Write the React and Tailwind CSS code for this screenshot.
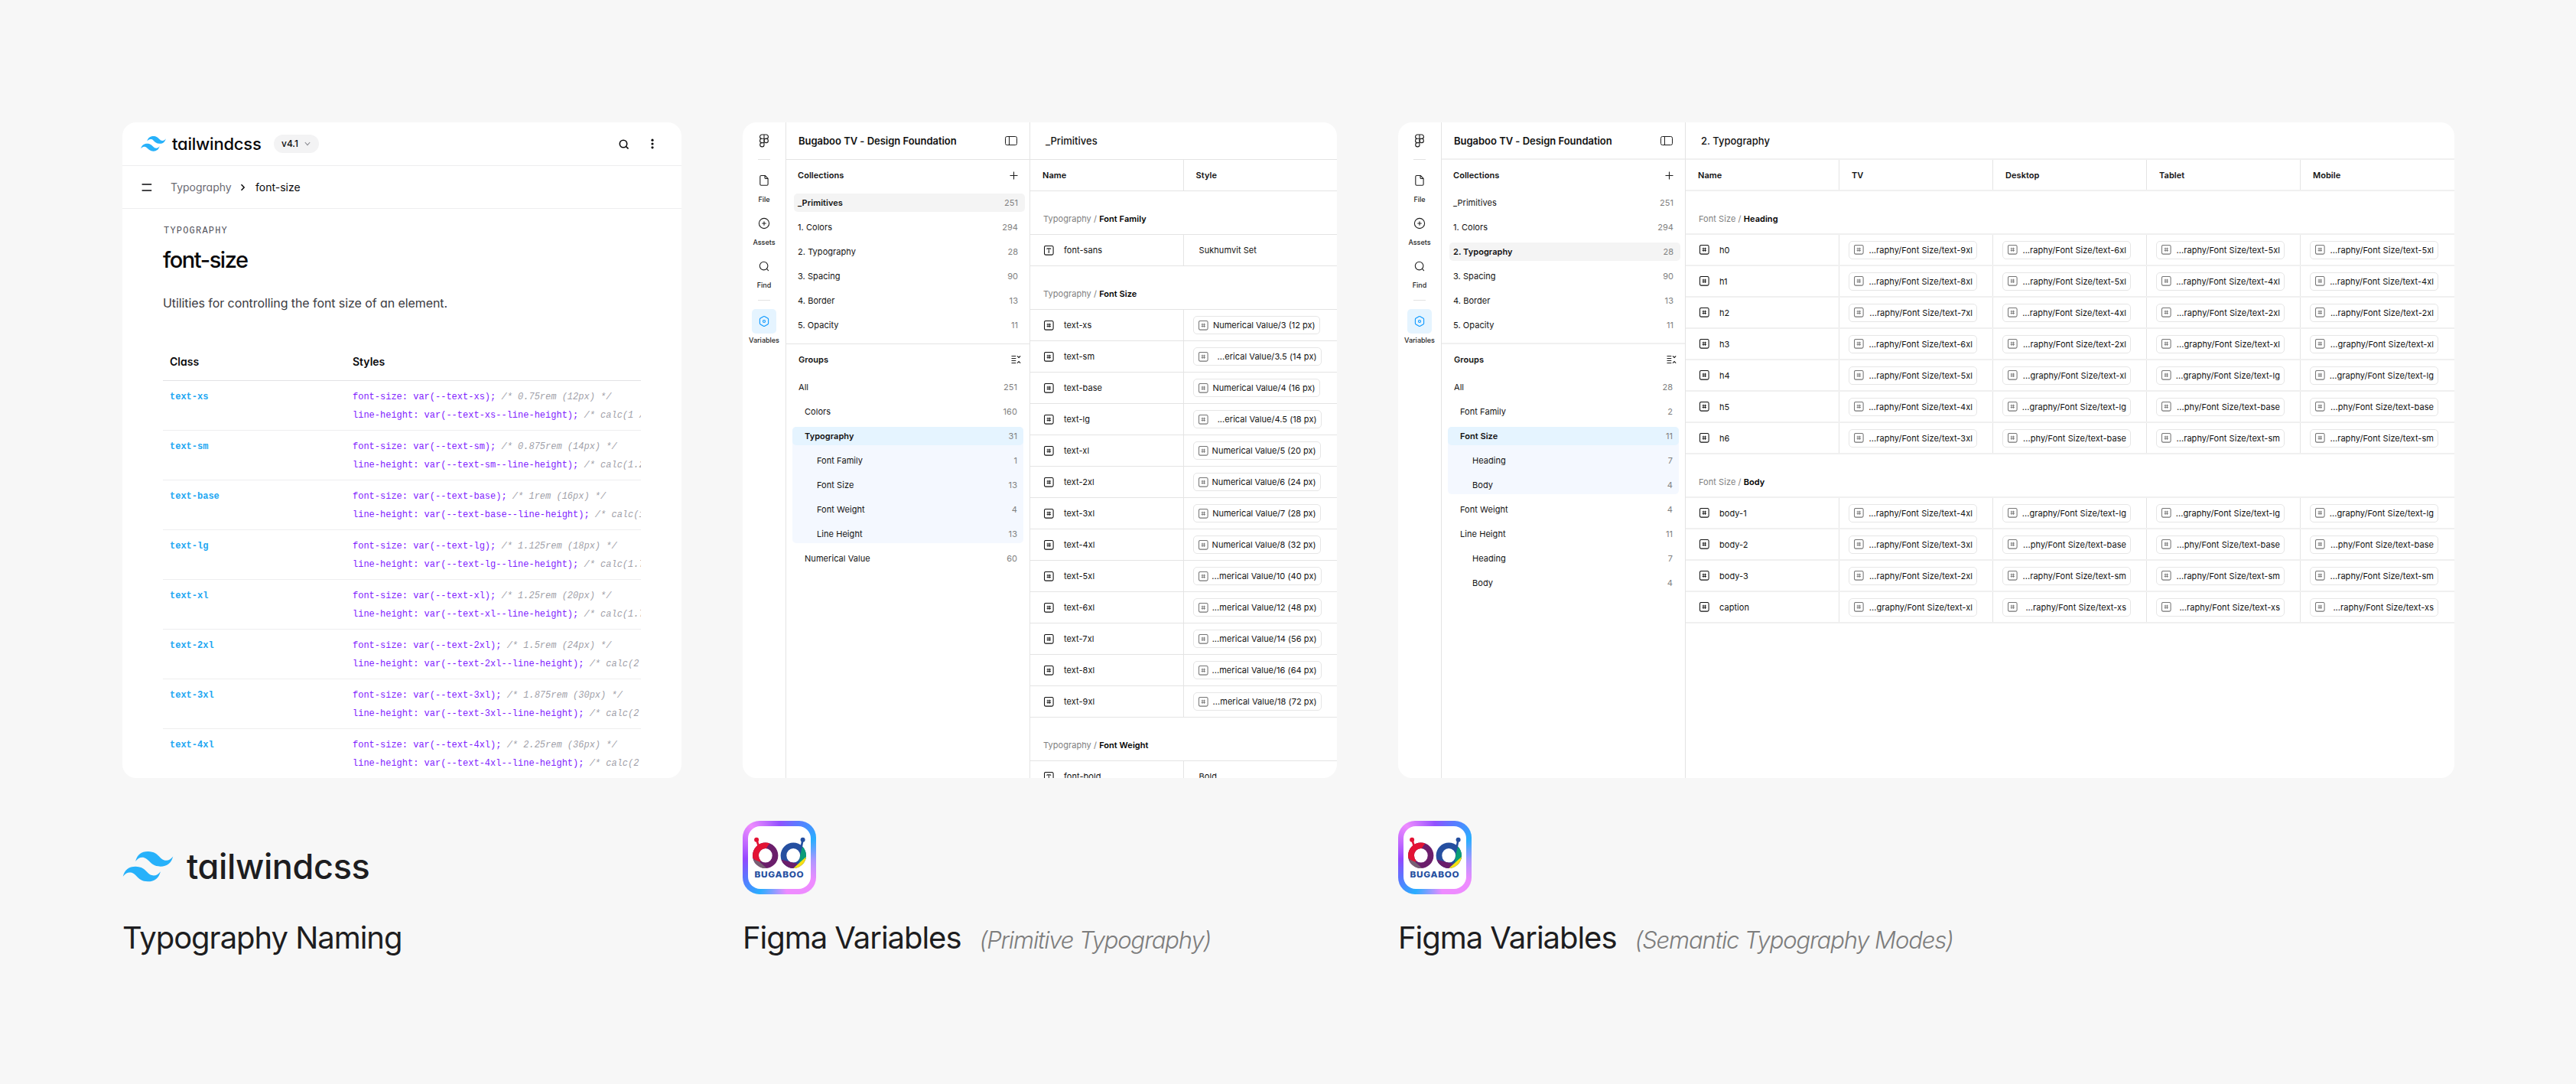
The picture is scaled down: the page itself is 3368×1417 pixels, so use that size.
import React from "react";

/* ---------- shared icons ---------- */

function TailwindMark({ className }) {
  return (
    <svg viewBox="0 0 54 33" className={className} fill="#27B1FA">
      <path
        fillRule="evenodd"
        clipRule="evenodd"
        d="M27 0c-7.2 0-11.7 3.6-13.5 10.8 2.7-3.6 5.85-4.95 9.45-4.05 2.054.513 3.522 2.004 5.147 3.653C30.744 13.09 33.808 16.2 40.5 16.2c7.2 0 11.7-3.6 13.5-10.8-2.7 3.6-5.85 4.95-9.45 4.05-2.054-.513-3.522-2.004-5.147-3.653C36.756 3.11 33.692 0 27 0zM13.5 16.2C6.3 16.2 1.8 19.8 0 27c2.7-3.6 5.85-4.95 9.45-4.05 2.054.514 3.522 2.004 5.147 3.653C17.244 29.29 20.308 32.4 27 32.4c7.2 0 11.7-3.6 13.5-10.8-2.7 3.6-5.85 4.95-9.45 4.05-2.054-.513-3.522-2.004-5.147-3.653C23.256 19.31 20.192 16.2 13.5 16.2z"
      />
    </svg>
  );
}

function FigmaIcon() {
  return (
    <svg width="14" height="18" viewBox="0 0 14 18" fill="none" stroke="#1e1e1e" strokeWidth="1.1">
      <path d="M7 1H4.2a2.65 2.65 0 0 0 0 5.3H7zM7 1h2.8a2.65 2.65 0 0 1 0 5.3H7zM7 6.3H4.2a2.65 2.65 0 0 0 0 5.3H7zM7 11.6H4.2A2.65 2.65 0 1 0 7 14.2z" />
      <circle cx="9.7" cy="8.95" r="2.65" />
    </svg>
  );
}

function FileIcon() {
  return (
    <svg width="24" height="24" viewBox="0 0 24 24" fill="none" stroke="#1e1e1e" strokeWidth="1.1" strokeLinejoin="round">
      <path d="M8.3 5.5h4.9l3.9 3.9v7.3a1.5 1.5 0 0 1-1.5 1.5H8.3a1.5 1.5 0 0 1-1.5-1.5V7a1.5 1.5 0 0 1 1.5-1.5z" />
      <path d="M13 5.6v2.6a1.3 1.3 0 0 0 1.3 1.3h2.6" />
    </svg>
  );
}

function AssetsIcon() {
  return (
    <svg width="24" height="24" viewBox="0 0 24 24" fill="none" stroke="#1e1e1e" strokeWidth="1.1" strokeLinecap="round">
      <circle cx="12" cy="12" r="6.6" />
      <path d="M12 9.7v4.6M9.7 12h4.6" />
    </svg>
  );
}

function FindIcon() {
  return (
    <svg width="24" height="24" viewBox="0 0 24 24" fill="none" stroke="#1e1e1e" strokeWidth="1.1" strokeLinecap="round">
      <circle cx="11.6" cy="11.6" r="5.3" />
      <path d="m15.4 15.4 2.2 2.2" />
    </svg>
  );
}

function VariablesIcon() {
  return (
    <svg width="24" height="24" viewBox="0 0 24 24" fill="none" stroke="#0d99ff" strokeWidth="1.1" strokeLinejoin="round">
      <path d="M11.2 5.8a1.6 1.6 0 0 1 1.6 0l4 2.3a1.6 1.6 0 0 1 .8 1.4v5a1.6 1.6 0 0 1-.8 1.4l-4 2.3a1.6 1.6 0 0 1-1.6 0l-4-2.3a1.6 1.6 0 0 1-.8-1.4v-5a1.6 1.6 0 0 1 .8-1.4z" />
      <circle cx="12" cy="12" r="1.5" />
    </svg>
  );
}

function PanelIcon() {
  return (
    <svg width="16" height="12" viewBox="0 0 16 12" fill="none" stroke="#1e1e1e">
      <rect x=".5" y=".5" width="15" height="11" rx="2" />
      <path d="M5.5.5v11" />
    </svg>
  );
}

function CollapseIcon() {
  return (
    <svg width="13" height="12" viewBox="0 0 13 12" fill="none" stroke="#1e1e1e" strokeWidth="1.15">
      <path d="M.5 1.5h5.8M.5 4.5h5.8M.5 7.5h5.8M.5 10.5h5.8M8 1.4l2.1 2 2.1-2M8 10.6l2.1-2 2.1 2" />
    </svg>
  );
}

function NumberIcon({ muted }) {
  return (
    <svg width="13" height="13" viewBox="0 0 13 13" fill="none" stroke={muted ? "#757575" : "#111"} className="shrink-0">
      <rect x=".5" y=".5" width="11.6" height="11.6" rx="1.8" strokeWidth="1.05" />
      <path d="M5.1 3.7v5.2M7.5 3.7v5.2M3.6 5.1H9M3.6 7.5H9" strokeWidth=".85" />
    </svg>
  );
}

function TextIcon() {
  return (
    <svg width="13" height="13" viewBox="0 0 13 13" fill="none" stroke="#111" className="shrink-0">
      <rect x=".5" y=".5" width="11.6" height="11.6" rx="1.8" strokeWidth="1.05" />
      <path d="M3.9 4.9V3.8h4.8v1.1M6.3 3.8v5.1M5.3 8.9h2" strokeWidth=".95" />
    </svg>
  );
}

function BugabooIcon() {
  return (
    <div className="h-24 w-24 rounded-[22px] bg-[conic-gradient(from_0deg,#9250ff_0deg,#5c7aff_28deg,#29aeff_62deg,#ae96ff_95deg,#ee8bff_125deg,#ee8bff_168deg,#29aeff_210deg,#5a78ff_238deg,#9448ff_268deg,#ee8bff_318deg,#9250ff_360deg)] p-[7px]">
      <div className="h-full w-full rounded-[16px] bg-white">
        <svg viewBox="7 7 82 82" className="h-full w-full">
          <defs>
            <clipPath id="ring-left">
              <path clipRule="evenodd" d="M13 45.3a16.7 16.7 0 1 0 33.4 0a16.7 16.7 0 1 0-33.4 0zM20.9 45.3a8.9 9.3 0 1 1 17.8 0a8.9 9.3 0 1 1-17.8 0z" />
            </clipPath>
            <clipPath id="ring-right">
              <path clipRule="evenodd" d="M49.6 45.3a16.7 16.7 0 1 0 33.4 0a16.7 16.7 0 1 0-33.4 0zM57.3 45.3a8.9 9.3 0 1 1 17.8 0a8.9 9.3 0 1 1-17.8 0z" />
            </clipPath>
          </defs>
          <g clipPath="url(#ring-left)">
            <rect x="12" y="28" width="36" height="36" fill="#6b1e6b" />
            <path d="M10 24h29l-9 13-8 18-10-7z" fill="#e31334" />
            <path d="M10 48.5l12 5 11 10H10z" fill="#776074" />
          </g>
          <circle cx="18.1" cy="24.8" r="3" fill="#e31334" />
          <path d="M18.8 26.5l2.2 7" stroke="#e31334" strokeWidth="2.6" />
          <g clipPath="url(#ring-right)">
            <rect x="48" y="28" width="36" height="36" fill="#254fa0" />
            <path d="M78 33l8 8v8l-12 6 1-9z" fill="#0b9d78" />
            <path d="M84 46L64 64h20z" fill="#f8e012" />
            <path d="M48 50l24 6-9 9H48z" fill="#6b1e6b" />
          </g>
          <circle cx="78.6" cy="24.8" r="3" fill="#254fa0" />
          <path d="M78.2 26.5l-1.8 9" stroke="#254fa0" strokeWidth="2.6" />
          <text x="15.6" y="73.9" textLength="64.8" lengthAdjust="spacingAndGlyphs" fill="#254fa0" className="font-['Inter'] text-[10.6px] font-extrabold tracking-[0.06em]">
            BUGABOO
          </text>
        </svg>
      </div>
    </div>
  );
}

/* ---------- Tailwind docs panel ---------- */

const classes = [
  ["text-xs", "0.75rem (12px)", "calc(1 /"],
  ["text-sm", "0.875rem (14px)", "calc(1.2"],
  ["text-base", "1rem (16px)", "calc(1"],
  ["text-lg", "1.125rem (18px)", "calc(1.7"],
  ["text-xl", "1.25rem (20px)", "calc(1.7"],
  ["text-2xl", "1.5rem (24px)", "calc(2"],
  ["text-3xl", "1.875rem (30px)", "calc(2"],
  ["text-4xl", "2.25rem (36px)", "calc(2"],
];

function DocsPanel() {
  return (
    <div className="h-[857px] w-[731px] overflow-hidden rounded-[18px] bg-white text-[#09090b] [font-feature-settings:'cv11']">
      <div className="flex h-[57px] items-center border-b border-[#eeeeef] pl-6 pr-9">
        <TailwindMark className="h-5 w-[33px]" />
        <span className="ml-2 w-[118px] text-[22px] font-medium leading-7 tracking-[-0.01em]">tailwindcss</span>
        <div className="ml-[15px] flex h-6 w-[59px] items-center rounded-full bg-[#f3f3f4] pl-2.5 text-xs font-medium">
          v4.1
          <svg width="8" height="6" viewBox="0 0 8 6" className="ml-2" fill="none" stroke="#8a8a90" strokeWidth="1.1">
            <path d="M.8 1 4 4.6 7.2 1" />
          </svg>
        </div>
        <svg width="13" height="13" viewBox="0 0 13 13" className="ml-auto" fill="none" stroke="#09090b" strokeWidth="1.6">
          <circle cx="6" cy="6" r="4.7" />
          <path d="m9.3 9.3 3.2 3.2" />
        </svg>
        <svg width="4" height="14" viewBox="0 0 4 14" className="ml-[29px]" fill="#09090b">
          <circle cx="2" cy="2.2" r="1.6" />
          <circle cx="2" cy="7" r="1.6" />
          <circle cx="2" cy="11.8" r="1.6" />
        </svg>
      </div>
      <div className="flex h-14 items-center border-b border-[#eeeeef] pl-[25px] text-sm leading-6">
        <svg width="14" height="10" viewBox="0 0 14 10" fill="none" stroke="#09090b" strokeWidth="1.5">
          <path d="M.6 1h12.6M.6 9h12.6" />
        </svg>
        <span className="ml-6 w-[79px] text-[#6b6b73]">Typography</span>
        <svg width="7" height="10" viewBox="0 0 7 10" className="ml-[12px]" fill="none" stroke="#09090b" strokeWidth="1.5">
          <path d="m1.5 1.2 3.7 3.8-3.7 3.8" />
        </svg>
        <span className="ml-[13px] text-[#09090b]">font-size</span>
      </div>
      <div className="ml-[53px] w-[625px] pt-[17px]">
        <div className="pl-px font-['Liberation_Mono'] text-xs leading-6 tracking-[0.1em] text-[#52525b]">TYPOGRAPHY</div>
        <div className="mt-1.5 text-[29px] font-medium leading-10 tracking-[-0.05em]">font-size</div>
        <p className="mt-[22px] text-base leading-7 tracking-[-0.005em] text-[#3b3b42]">
          Utilities for controlling the font size of an element.
        </p>
        <div className="mt-[50px] flex h-[38px] items-start border-b border-[#e2e2e4] pl-[9px] pt-px text-sm font-semibold leading-6">
          <span className="w-[239px]">Class</span>
          <span>Styles</span>
        </div>
        {classes.map(([name, size, calc]) => (
          <div key={name} className="flex h-[65px] items-start border-b border-[#eeeeef] pl-[9px] pt-[9px] font-['Liberation_Mono'] text-xs leading-6">
            <span className="w-[239px] shrink-0 font-semibold text-[#22a7f2]">{name}</span>
            <div className="min-w-0 flex-1 overflow-hidden whitespace-nowrap text-[#7f22fe]">
              <div>
                {`font-size: var(--${name}); `}
                <span className="italic text-[#9f9fa9]">{`/* ${size} */`}</span>
              </div>
              <div>
                {`line-height: var(--${name}--line-height); `}
                <span className="italic text-[#9f9fa9]">{`/* ${calc}`}</span>
              </div>
            </div>
          </div>
        ))}
      </div>
    </div>
  );
}

/* ---------- Figma variables panels ---------- */

const collections = [
  ["_Primitives", 251],
  ["1. Colors", 294],
  ["2. Typography", 28],
  ["3. Spacing", 90],
  ["4. Border", 13],
  ["5. Opacity", 11],
];

const indent = ["pl-2", "pl-4", "pl-8"];

function Rail({ line }) {
  const label = "mt-[7px] text-[9px] font-medium leading-3 text-[#1e1e1e]";
  return (
    <div className={`flex w-[57px] shrink-0 flex-col items-center border-r pt-[15px] ${line}`}>
      <FigmaIcon />
      <div className="mt-[15px] h-px w-4 bg-[#e2e2e2]" />
      <div className="mt-[15px] flex h-14 flex-col items-center">
        <FileIcon />
        <span className={label}>File</span>
      </div>
      <div className="flex h-14 flex-col items-center">
        <AssetsIcon />
        <span className={label}>Assets</span>
      </div>
      <div className="flex h-14 flex-col items-center">
        <FindIcon />
        <span className={label}>Find</span>
      </div>
      <div className="h-px w-4 bg-[#e2e2e2]" />
      <div className="mt-[11px] flex h-8 w-8 items-center justify-center rounded-[5px] bg-[#e5f4ff]">
        <VariablesIcon />
      </div>
      <span className="mt-[3px] text-[9px] font-medium leading-3 text-[#1e1e1e]">Variables</span>
    </div>
  );
}

function GroupRow({ name, count, level, tone }) {
  return (
    <div
      className={`flex h-6 items-center justify-between rounded-[5px] pr-2 ${indent[level]} ${
        tone ? "bg-[#e5f4ff] font-semibold" : ""
      }`}
    >
      <span>{name}</span>
      <span className="font-normal text-[#808080]">{count}</span>
    </div>
  );
}

function Sidebar({ active, before, open, nested, after, line, hline }) {
  return (
    <div className={`flex w-[319px] shrink-0 flex-col border-r text-[11px] leading-4 tracking-[0.005em] text-[#111] ${line}`}>
      <div className={`flex h-[49px] items-center justify-between pl-4 pr-4 text-[13px] font-semibold tracking-[-0.002em] ${hline}`}>
        <span>Bugaboo TV - Design Foundation</span>
        <PanelIcon />
      </div>
      <div className={`flex h-[241px] flex-col gap-2 pl-2.5 pr-1.5 ${hline}`}>
        <div className="flex h-9 items-center justify-between pl-[5px] pr-[9px] pt-1 font-semibold">
          <span>Collections</span>
          <svg width="11" height="11" viewBox="0 0 11 11" fill="none" stroke="#1e1e1e" strokeWidth="1.1">
            <path d="M5.5.5v10M.5 5.5h10" />
          </svg>
        </div>
        {collections.map(([name, count]) => (
          <div
            key={name}
            className={`flex h-6 shrink-0 items-center justify-between rounded-[5px] pl-[5px] pr-[9px] ${
              name === active ? "bg-[#f4f4f4] font-semibold" : ""
            }`}
          >
            <span>{name}</span>
            <span className="font-normal text-[#808080]">{count}</span>
          </div>
        ))}
      </div>
      <div className="flex flex-col gap-2 pl-2 pr-2">
        <div className="flex h-9 items-center justify-between pl-2 pr-[3px] pt-1 font-semibold">
          <span>Groups</span>
          <CollapseIcon />
        </div>
        {before.map(([name, count, level]) => (
          <GroupRow key={name} name={name} count={count} level={level} />
        ))}
        <div className="flex flex-col gap-2 rounded-[5px] bg-[#f4f8ff]">
          <GroupRow name={open[0]} count={open[1]} level={1} tone />
          {nested.map(([name, count]) => (
            <GroupRow key={name} name={name} count={count} level={2} />
          ))}
        </div>
        {after.map(([name, count, level]) => (
          <GroupRow key={name} name={name} count={count} level={level} />
        ))}
      </div>
    </div>
  );
}

function Chip({ text, width }) {
  return (
    <div className={`ml-3 flex h-6 items-center justify-between rounded-[5px] border border-[#e6e6e6] pl-1.5 pr-[5px] ${width}`}>
      <NumberIcon muted />
      <span className={`whitespace-nowrap ${text.startsWith("...") ? "" : "tracking-normal"}`}>{text}</span>
    </div>
  );
}

function Table({ title, columns, sections, hline, line, last }) {
  return (
    <div className="flex min-w-0 flex-1 flex-col text-[11px] leading-4 tracking-[0.005em] text-[#111]">
      <div className={`flex h-[49px] shrink-0 items-center pl-5 text-[13px] font-medium tracking-normal ${hline}`}>{title}</div>
      <div className={`flex h-[41px] shrink-0 font-semibold ${hline}`}>
        <div className={`flex w-[201px] items-center border-r pl-4 ${line}`}>Name</div>
        {columns.map((name, i) => (
          <div key={name} className={`flex w-[201px] items-center pl-4 ${i < last ? `border-r ${line}` : ""}`}>
            {name}
          </div>
        ))}
      </div>
      {sections.map(({ group, name, rows }) => (
        <React.Fragment key={name}>
          <div className={`flex h-[57px] shrink-0 items-center whitespace-pre pl-[17px] pt-4 ${hline}`}>
            <span className="text-[#808080]">{`${group} / `}</span>
            <span className="font-semibold text-black">{name}</span>
          </div>
          {rows.map(([label, kind, ...cells]) => (
            <div key={label} className={`flex h-[41px] shrink-0 ${hline}`}>
              <div className={`flex w-[201px] items-center border-r pl-[18px] ${line}`}>
                {kind === "text" ? <TextIcon /> : <NumberIcon />}
                <span className="ml-[13px]">{label}</span>
              </div>
              {cells.map((cell, i) => (
                <div key={i} className={`flex w-[201px] items-center ${i < last ? `border-r ${line}` : ""}`}>
                  {kind === "text" ? (
                    <span className="pl-5">{cell}</span>
                  ) : (
                    <Chip
                      text={cell}
                      width={
                        cell.startsWith("...")
                          ? "w-[168px]"
                          : cell.includes("/3 ") || cell.includes("/4 ")
                            ? "w-[166px]"
                            : "w-[167px]"
                      }
                    />
                  )}
                </div>
              ))}
            </div>
          ))}
        </React.Fragment>
      ))}
    </div>
  );
}

const primitiveSections = [
  { group: "Typography", name: "Font Family", rows: [["font-sans", "text", "Sukhumvit Set"]] },
  {
    group: "Typography",
    name: "Font Size",
    rows: [
      ["text-xs", "num", "Numerical Value/3 (12 px)"],
      ["text-sm", "num", "...erical Value/3.5 (14 px)"],
      ["text-base", "num", "Numerical Value/4 (16 px)"],
      ["text-lg", "num", "...erical Value/4.5 (18 px)"],
      ["text-xl", "num", "Numerical Value/5 (20 px)"],
      ["text-2xl", "num", "Numerical Value/6 (24 px)"],
      ["text-3xl", "num", "Numerical Value/7 (28 px)"],
      ["text-4xl", "num", "Numerical Value/8 (32 px)"],
      ["text-5xl", "num", "...merical Value/10 (40 px)"],
      ["text-6xl", "num", "...merical Value/12 (48 px)"],
      ["text-7xl", "num", "...merical Value/14 (56 px)"],
      ["text-8xl", "num", "...merical Value/16 (64 px)"],
      ["text-9xl", "num", "...merical Value/18 (72 px)"],
    ],
  },
  { group: "Typography", name: "Font Weight", rows: [["font-bold", "text", "Bold"]] },
];

const prefix = {
  base: "...phy",
  lg: "...graphy",
  xl: "...graphy",
};

const row = (label, ...sizes) => [label, "num", ...sizes.map((s) => `${prefix[s] || "...raphy"}/Font Size/text-${s}`)];

const semanticSections = [
  {
    group: "Font Size",
    name: "Heading",
    rows: [
      row("h0", "9xl", "6xl", "5xl", "5xl"),
      row("h1", "8xl", "5xl", "4xl", "4xl"),
      row("h2", "7xl", "4xl", "2xl", "2xl"),
      row("h3", "6xl", "2xl", "xl", "xl"),
      row("h4", "5xl", "xl", "lg", "lg"),
      row("h5", "4xl", "lg", "base", "base"),
      row("h6", "3xl", "base", "sm", "sm"),
    ],
  },
  {
    group: "Font Size",
    name: "Body",
    rows: [
      row("body-1", "4xl", "lg", "lg", "lg"),
      row("body-2", "3xl", "base", "base", "base"),
      row("body-3", "2xl", "sm", "sm", "sm"),
      row("caption", "xl", "xs", "xs", "xs"),
    ],
  },
];

function Caption({ title, note }) {
  return (
    <div className="mt-[33px] flex items-baseline whitespace-nowrap leading-[48px] text-[#1d1d20]">
      <span className="text-[40px] tracking-[-0.026em]">{title}</span>
      {note && <span className="ml-6 text-[31px] font-light italic tracking-[-0.036em] text-[#7d7d7d]">{note}</span>}
    </div>
  );
}

export default function App() {
  const line = "border-[#e4e4e4]";
  const crisp = "border-b border-b-[#e4e4e4]";
  const soft = "border-b-2 border-b-[#f0f0f0]";
  return (
    <div className="flex h-[1417px] w-[3368px] items-start gap-20 overflow-hidden bg-[#f7f7f7] pl-40 pt-40 font-['Inter',sans-serif]">
      <section className="flex flex-col">
        <DocsPanel />
        <div className="mt-14 flex h-24 items-center pt-6 [font-feature-settings:'cv11']">
          <TailwindMark className="h-10 w-[67px]" />
          <span className="ml-[17px] text-[45px] font-medium leading-[48px] tracking-[-0.008em] text-[#1d1d20]">tailwindcss</span>
        </div>
        <Caption title="Typography Naming" />
      </section>

      <section className="flex flex-col">
        <div className="flex h-[857px] w-[777px] overflow-hidden rounded-[18px] bg-white">
          <Rail line={line} />
          <Sidebar
            active="_Primitives"
            line={line}
            hline={crisp}
            before={[["All", 251, 0], ["Colors", 160, 1]]}
            open={["Typography", 31]}
            nested={[["Font Family", 1], ["Font Size", 13], ["Font Weight", 4], ["Line Height", 13]]}
            after={[["Numerical Value", 60, 1]]}
          />
          <Table title="_Primitives" columns={["Style"]} sections={primitiveSections} hline={crisp} line={line} last={0} />
        </div>
        <div className="mt-14">
          <BugabooIcon />
        </div>
        <Caption title="Figma Variables" note="(Primitive Typography)" />
      </section>

      <section className="flex flex-col">
        <div className="flex h-[857px] w-[1381px] overflow-hidden rounded-[18px] bg-white">
          <Rail line={line} />
          <Sidebar
            active="2. Typography"
            line={line}
            hline={soft}
            before={[["All", 28, 0], ["Font Family", 2, 1]]}
            open={["Font Size", 11]}
            nested={[["Heading", 7], ["Body", 4]]}
            after={[["Font Weight", 4, 1], ["Line Height", 11, 1], ["Heading", 7, 2], ["Body", 4, 2]]}
          />
          <Table
            title="2. Typography"
            columns={["TV", "Desktop", "Tablet", "Mobile"]}
            sections={semanticSections}
            hline={soft}
            line={line}
            last={3}
          />
        </div>
        <div className="mt-14">
          <BugabooIcon />
        </div>
        <Caption title="Figma Variables" note="(Semantic Typography Modes)" />
      </section>
    </div>
  );
}
